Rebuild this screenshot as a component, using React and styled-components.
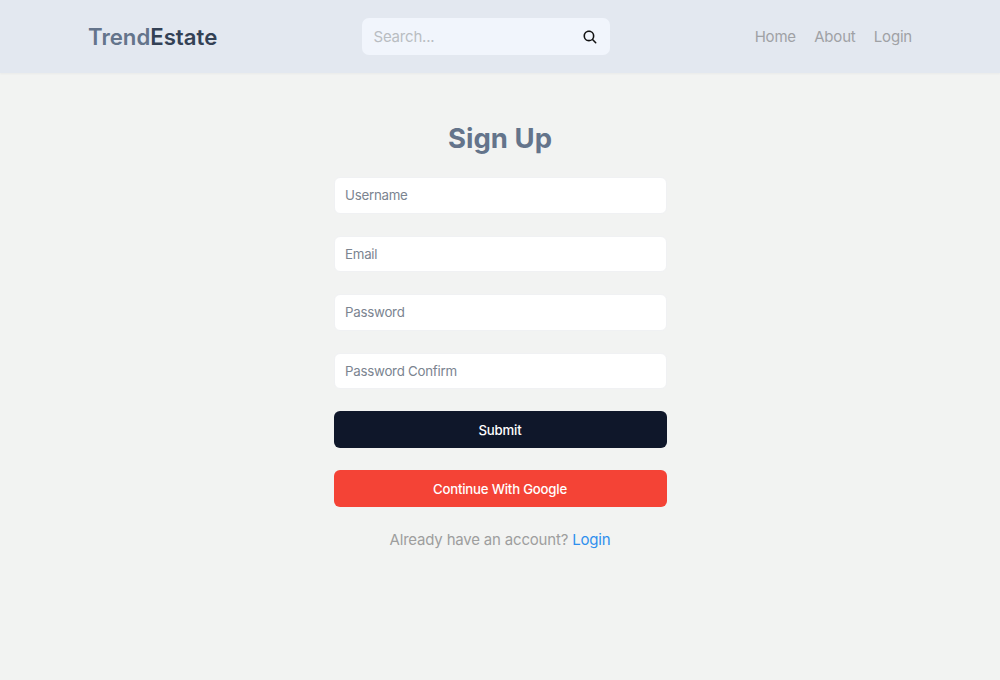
import React from 'react'
import styled, { createGlobalStyle } from 'styled-components'
import { IoSearch } from 'react-icons/io5'

const GlobalStyle = createGlobalStyle`
    * {
        box-sizing: border-box;
    }

    body {
        margin: 0;
        background: #f2f3f2;
        font-family: Inter, sans-serif;
    }
`

const Header = styled.header`
    height: 73px;
    padding: 0 88px;
    display: flex;
    justify-content: space-between;
    align-items: center;
    background: #e3e8f0;
    box-shadow: 0 1px 2px rgba(0, 0, 0, 0.04);
`

const Logo = styled.h1`
    margin: 0;
    font-size: 22.2px;
    line-height: 30px;
    font-weight: 600;
    color: #64748b;
`

const LogoDark = styled.span`
    color: #334155;
`

const SearchBar = styled.form`
    width: 248px;
    height: 37px;
    padding: 0 12px 0 11.5px;
    display: flex;
    align-items: center;
    justify-content: space-between;
    border-radius: 7px;
    background: #f1f5fc;
`

const SearchInput = styled.input`
    width: 180px;
    padding: 0;
    border: none;
    outline: none;
    background: transparent;
    font: 400 15px/22px Inter, sans-serif;
    letter-spacing: -0.2px;

    &::placeholder {
        color: #b9bdc2;
    }
`

const SearchButton = styled.button`
    padding: 0;
    display: flex;
    border: none;
    background: transparent;
    color: #111;
`

const Nav = styled.nav`
    display: flex;
    gap: 18.3px;
`

const NavLink = styled.a`
    font-size: 15px;
    line-height: 22px;
    letter-spacing: -0.2px;
    color: #9fa1a5;
`

const Form = styled.form`
    width: 333px;
    margin: 47px auto 0;
    display: flex;
    flex-direction: column;
    gap: 22px;
`

const Title = styled.h2`
    margin: 0 0 -1px;
    font-size: 27.5px;
    line-height: 36px;
    font-weight: 700;
    text-align: center;
    color: #64748b;
`

const Field = styled.input`
    height: 36.6px;
    padding: 0 10.5px;
    border: 1px solid #f0f1f3;
    border-radius: 6px;
    outline: none;
    background: #fff;
    font: 400 13.3px/18px Inter, sans-serif;
    letter-spacing: -0.25px;

    &::placeholder {
        color: #7b8490;
    }
`

const Button = styled.button`
    height: 36.6px;
    padding: 1px 0 0;
    border: none;
    border-radius: 6px;
    background: ${(props) => props.$color};
    color: #fff;
    font: 500 13.2px/18px Inter, sans-serif;
    letter-spacing: -0.2px;
`

const Footer = styled.p`
    margin: 0;
    font-size: 15px;
    line-height: 22px;
    letter-spacing: -0.19px;
    text-align: center;
    color: #9e9e9e;
`

const LoginLink = styled.a`
    color: #2f8fee;
`

const fields = [
    { name: 'username', type: 'text', label: 'Username' },
    { name: 'email', type: 'email', label: 'Email' },
    { name: 'password', type: 'password', label: 'Password' },
    { name: 'passwordConfirm', type: 'password', label: 'Password Confirm' },
]

const Navbar = () => {
    return (
        <Header>
            <Logo>Trend<LogoDark>Estate</LogoDark></Logo>
            <SearchBar>
                <SearchInput type="text" placeholder="Search..." />
                <SearchButton type="button" aria-label="Search">
                    <IoSearch size={16} />
                </SearchButton>
            </SearchBar>
            <Nav>
                <NavLink>Home</NavLink>
                <NavLink>About</NavLink>
                <NavLink>Login</NavLink>
            </Nav>
        </Header>
    )
}

const App = () => {
    return (
        <>
            <GlobalStyle />
            <Navbar />
            <Form>
                <Title>Sign Up</Title>
                {fields.map((field) => (
                    <Field key={field.name} type={field.type} placeholder={field.label} />
                ))}
                <Button type="button" $color="#0f172a">Submit</Button>
                <Button type="button" $color="#f44336">Continue With Google</Button>
                <Footer>Already have an account? <LoginLink>Login</LoginLink></Footer>
            </Form>
        </>
    )
}

export default App
